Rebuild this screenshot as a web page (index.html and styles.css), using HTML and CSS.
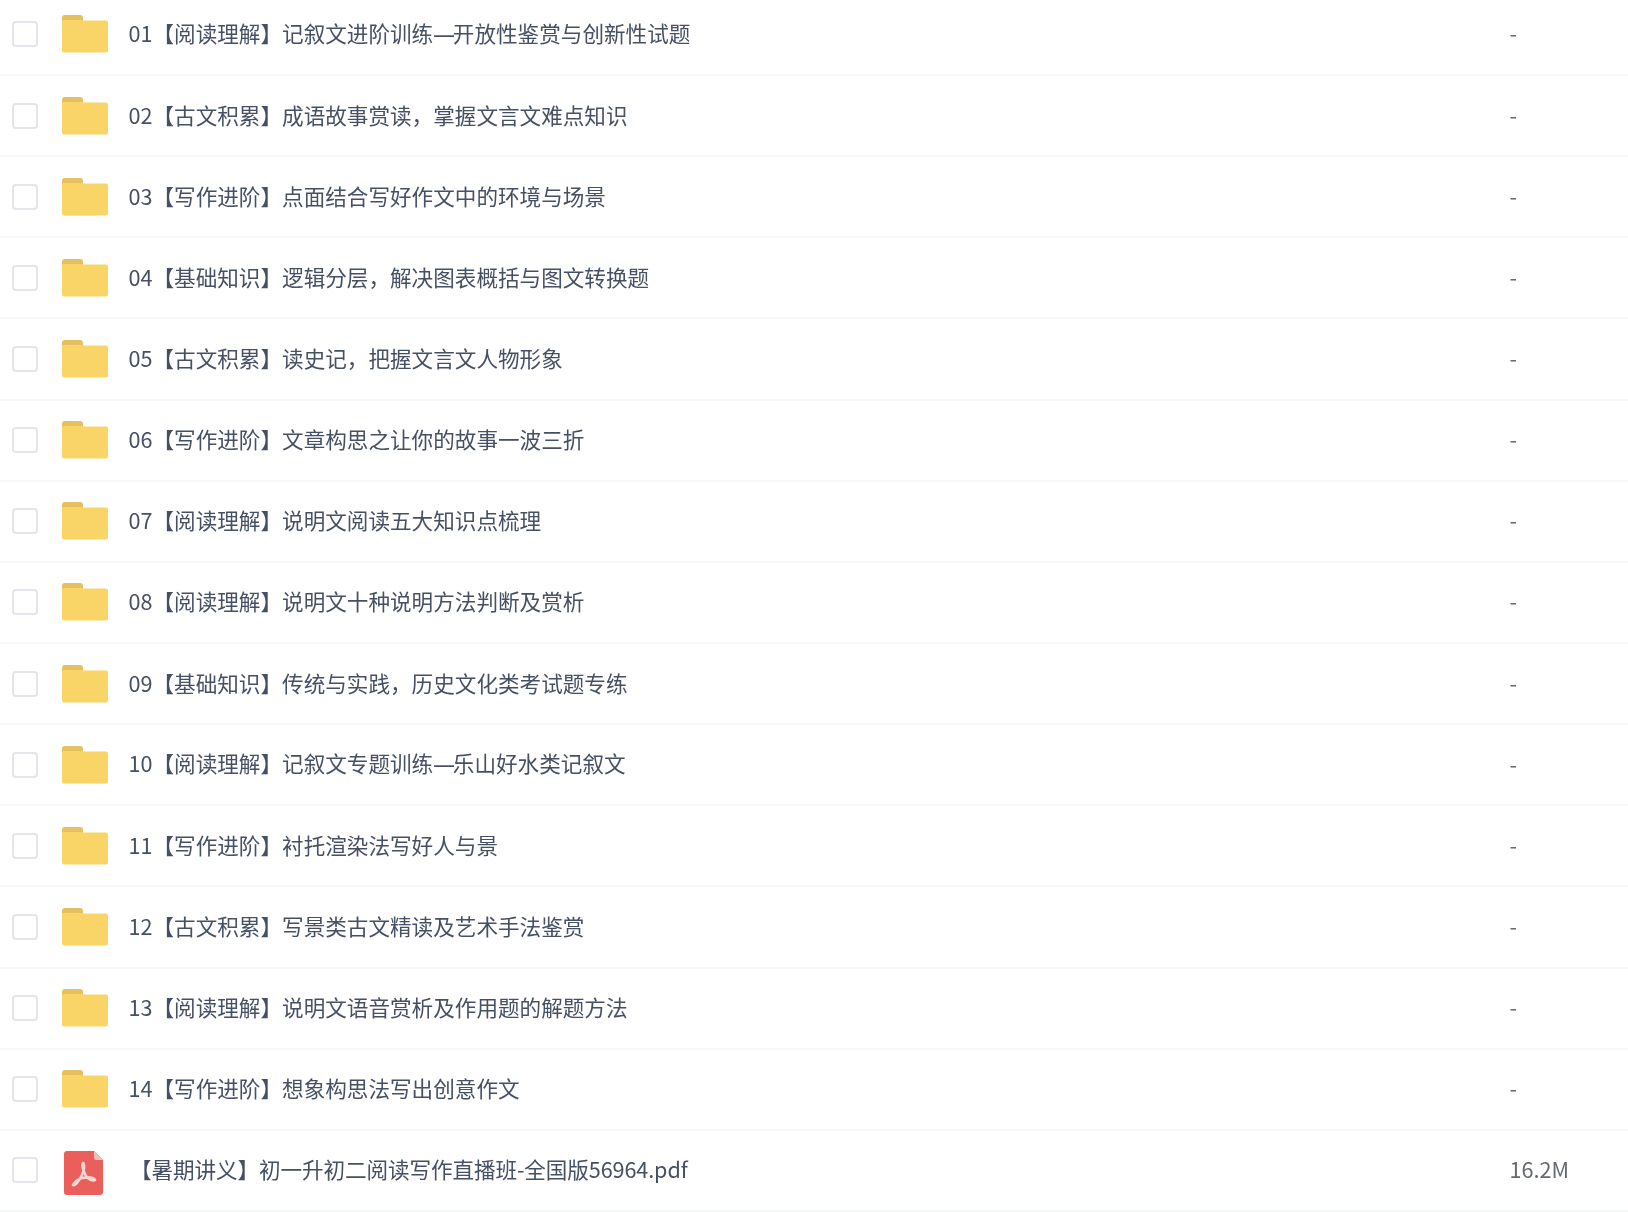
FILE: index.html
```html
<!DOCTYPE html>
<html lang="zh">
<head>
<meta charset="utf-8">
<title>文件列表</title>
<link rel="stylesheet" href="styles.css">
</head>
<body>
<svg class="defs" width="0" height="0" aria-hidden="true">
  <symbol id="folder" viewBox="0 0 46 38">
    <path d="M0 3a3 3 0 0 1 3-3h15a3 3 0 0 1 3 3v3H0z" fill="#e4c05e"/>
    <path d="M0 7a2 2 0 0 1 2-2h17l2 0.5h23a2 2 0 0 1 2 2V35.500a2 2 0 0 1-2 2H2a2 2 0 0 1-2-2z" fill="#f9d568"/>
  </symbol>
</svg>
<main class="list">
  <div class="row"><span class="check"></span><svg class="folder"><use href="#folder"/></svg><span class="name">01【阅读理解】记叙文进阶训练<span class="dash">—</span>开放性鉴赏与创新性试题</span><span class="size">-</span></div>
  <div class="row"><span class="check"></span><svg class="folder"><use href="#folder"/></svg><span class="name">02【古文积累】成语故事赏读，掌握文言文难点知识</span><span class="size">-</span></div>
  <div class="row"><span class="check"></span><svg class="folder"><use href="#folder"/></svg><span class="name">03【写作进阶】点面结合写好作文中的环境与场景</span><span class="size">-</span></div>
  <div class="row"><span class="check"></span><svg class="folder"><use href="#folder"/></svg><span class="name">04【基础知识】逻辑分层，解决图表概括与图文转换题</span><span class="size">-</span></div>
  <div class="row"><span class="check"></span><svg class="folder"><use href="#folder"/></svg><span class="name">05【古文积累】读史记，把握文言文人物形象</span><span class="size">-</span></div>
  <div class="row"><span class="check"></span><svg class="folder"><use href="#folder"/></svg><span class="name">06【写作进阶】文章构思之让你的故事一波三折</span><span class="size">-</span></div>
  <div class="row"><span class="check"></span><svg class="folder"><use href="#folder"/></svg><span class="name">07【阅读理解】说明文阅读五大知识点梳理</span><span class="size">-</span></div>
  <div class="row"><span class="check"></span><svg class="folder"><use href="#folder"/></svg><span class="name">08【阅读理解】说明文十种说明方法判断及赏析</span><span class="size">-</span></div>
  <div class="row"><span class="check"></span><svg class="folder"><use href="#folder"/></svg><span class="name">09【基础知识】传统与实践，历史文化类考试题专练</span><span class="size">-</span></div>
  <div class="row"><span class="check"></span><svg class="folder"><use href="#folder"/></svg><span class="name">10【阅读理解】记叙文专题训练<span class="dash">—</span>乐山好水类记叙文</span><span class="size">-</span></div>
  <div class="row"><span class="check"></span><svg class="folder"><use href="#folder"/></svg><span class="name">11【写作进阶】衬托渲染法写好人与景</span><span class="size">-</span></div>
  <div class="row"><span class="check"></span><svg class="folder"><use href="#folder"/></svg><span class="name">12【古文积累】写景类古文精读及艺术手法鉴赏</span><span class="size">-</span></div>
  <div class="row"><span class="check"></span><svg class="folder"><use href="#folder"/></svg><span class="name">13【阅读理解】说明文语音赏析及作用题的解题方法</span><span class="size">-</span></div>
  <div class="row"><span class="check"></span><svg class="folder"><use href="#folder"/></svg><span class="name">14【写作进阶】想象构思法写出创意作文</span><span class="size">-</span></div>
  <div class="row"><span class="check"></span>
    <svg class="pdf" viewBox="0 0 39 44">
      <path d="M3 0H30L39 9V41a3 3 0 0 1-3 3H3a3 3 0 0 1-3-3V3a3 3 0 0 1 3-3z" fill="#ea5f5b"/>
      <path d="M30 0L39 9H32a2 2 0 0 1-2-2z" fill="#f6bcb8"/>
      <path d="M19 12C17 15 20 21 22 25C24 28 28 30 31 29C29 26 23 26 18 27C14 28 10 32 9 34C12 35 16 28 18 24C20 20 21 14 19 12Z" fill="none" stroke="#f8d5d0" stroke-width="2.700" stroke-linejoin="round"/>
    </svg>
    <span class="name pdf-name">【暑期讲义】初一升初二阅读写作直播班-全国版56964.pdf</span><span class="size">16.2M</span></div>
</main>
</body>
</html>
```
FILE: styles.css
```css
* { box-sizing: border-box; }
html, body { margin: 0; padding: 0; background: #fff; }
body { width: 1628px; height: 1212px; overflow: hidden; font-family: "Noto Sans CJK SC", "Noto Sans", sans-serif; }
.defs { position: absolute; }
.list { display: flex; flex-direction: column; margin-top: -5.15px; }
.row {
  display: flex;
  align-items: center;
  height: 81.15px;
  flex: none;
  border-bottom: 2px solid #f6f7fa;
  padding-left: 12px;
  filter: blur(0.4px);
}
.check {
  flex: none;
  width: 26px;
  height: 26px;
  border: 2px solid #e3e5ec;
  border-radius: 4px;
  background: #fff;
}
.folder { flex: none; width: 46px; height: 38px; margin-left: 24px; }
.pdf { flex: none; width: 39px; height: 44px; margin-left: 26px; margin-top: 5px; }
.name {
  flex: none;
  width: 1381px;
  margin-left: 20.500px;
  padding-bottom: 2px;
  font-size: 21.600px;
  line-height: 30px;
  color: #465064;
  white-space: nowrap;
}
.dash { font-family: "Noto Sans", sans-serif; letter-spacing: -2px; }
.pdf-name { width: 1379.500px; margin-left: 27px; letter-spacing: -0.100px; }
.size {
  flex: none;
  padding-bottom: 2px;
  font-size: 21.600px;
  line-height: 30px;
  color: #666a70;
  white-space: nowrap;
}
```
